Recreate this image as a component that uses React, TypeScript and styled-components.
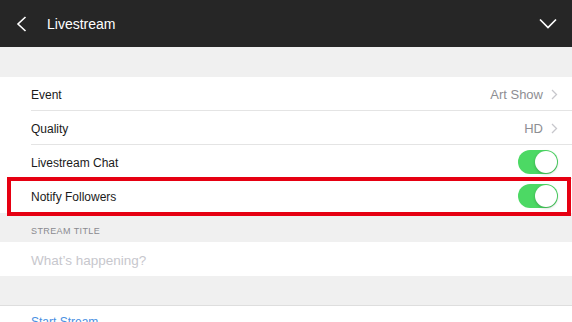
import React from 'react';
import styled, { createGlobalStyle } from 'styled-components';

const GlobalStyle = createGlobalStyle`
  html, body {
    margin: 0;
    padding: 0;
    background: #f0f0f0;
    font-family: 'Liberation Sans', Arial, sans-serif;
    -webkit-font-smoothing: antialiased;
  }
`;

const Page = styled.div`
  width: 572px;
  height: 322px;
  overflow: hidden;
  background: #f0f0f0;
`;

const Header = styled.header`
  height: 47px;
  background: #262626;
  display: flex;
  align-items: center;
  padding: 0 15px 0 16px;
  box-sizing: border-box;
`;

const Title = styled.h1`
  flex: 1;
  margin: 0 0 0 20px;
  color: #fff;
  font-size: 14px;
  font-weight: normal;
`;

const IconBox = styled.span`
  display: flex;
  align-items: center;
`;

const Spacer = styled.div<{ h: number }>`
  height: ${(p) => p.h}px;
`;

const Group = styled.section`
  background: #fff;
`;

const Row = styled.div<{ last?: boolean }>`
  position: relative;
  height: 34px;
  margin-left: 31px;
  padding: 2px 14px 0 0;
  display: flex;
  align-items: center;
  box-sizing: border-box;
  border-bottom: ${(p) => (p.last ? 'none' : '1px solid #e4e4e4')};
`;

const Label = styled.span`
  flex: 1;
  font-size: 12px;
  color: #1a1a1a;
`;

const Value = styled.span`
  font-size: 13px;
  color: #8e8e93;
  margin-right: 8px;
`;

const Highlight = styled.div`
  position: absolute;
  top: -2px;
  bottom: -3px;
  left: -24px;
  right: 1px;
  border: 4px solid #e60012;
  pointer-events: none;
`;

const Toggle = styled.div<{ on: boolean }>`
  width: 40px;
  height: 24px;
  margin-top: -2px;
  border-radius: 12px;
  background: ${(p) => (p.on ? '#4cd964' : '#e5e5ea')};
  display: flex;
  align-items: center;
  justify-content: ${(p) => (p.on ? 'flex-end' : 'flex-start')};
  padding: 1px;
  box-sizing: border-box;
`;

const Knob = styled.div`
  width: 22px;
  height: 22px;
  border-radius: 50%;
  background: #fff;
  box-shadow: 0 1px 3px rgba(0, 0, 0, 0.25);
`;

const SectionHeader = styled.div`
  height: 29px;
  padding-left: 31px;
  display: flex;
  align-items: flex-end;
  padding-bottom: 6px;
  box-sizing: border-box;
  font-size: 9px;
  letter-spacing: 0.4px;
  color: #8a8a8f;
  text-transform: uppercase;
`;

const Placeholder = styled.span`
  font-size: 13.5px;
  color: #c7c7cd;
`;

const ActionGroup = styled(Group)`
  border-top: 1px solid #dedede;
  height: 40px;
`;

const Action = styled.div`
  padding: 9px 0 0 31px;
  font-size: 12px;
  color: #4a90e2;
`;

const Chevron = () => (
  <svg width="7" height="11" viewBox="0 0 7 11">
    <path d="M1 1l4.5 4.5L1 10" fill="none" stroke="#c7c7cc" strokeWidth="1.3" />
  </svg>
);

const ToggleSwitch: React.FC<{ on: boolean }> = ({ on }) => (
  <Toggle on={on}>
    <Knob />
  </Toggle>
);

const App: React.FC = () => (
  <Page>
    <GlobalStyle />
    <Header>
      <IconBox>
        <svg width="11" height="16" viewBox="0 0 11 16">
          <path d="M9.5 1L2 8l7.5 7" fill="none" stroke="#fff" strokeWidth="1.6" />
        </svg>
      </IconBox>
      <Title>Livestream</Title>
      <IconBox>
        <svg width="18" height="11" viewBox="0 0 18 11">
          <path d="M1 1.5l8 8 8-8" fill="none" stroke="#fff" strokeWidth="1.7" />
        </svg>
      </IconBox>
    </Header>
    <Spacer h={30} />
    <Group>
      <Row>
        <Label>Event</Label>
        <Value>Art Show</Value>
        <Chevron />
      </Row>
      <Row>
        <Label>Quality</Label>
        <Value>HD</Value>
        <Chevron />
      </Row>
      <Row>
        <Label>Livestream Chat</Label>
        <ToggleSwitch on />
      </Row>
      <Row last>
        <Label>Notify Followers</Label>
        <ToggleSwitch on />
        <Highlight />
      </Row>
    </Group>
    <SectionHeader>Stream Title</SectionHeader>
    <Group>
      <Row last>
        <Placeholder>What’s happening?</Placeholder>
      </Row>
    </Group>
    <Spacer h={29} />
    <ActionGroup>
      <Action>Start Stream</Action>
    </ActionGroup>
  </Page>
);

export default App;
